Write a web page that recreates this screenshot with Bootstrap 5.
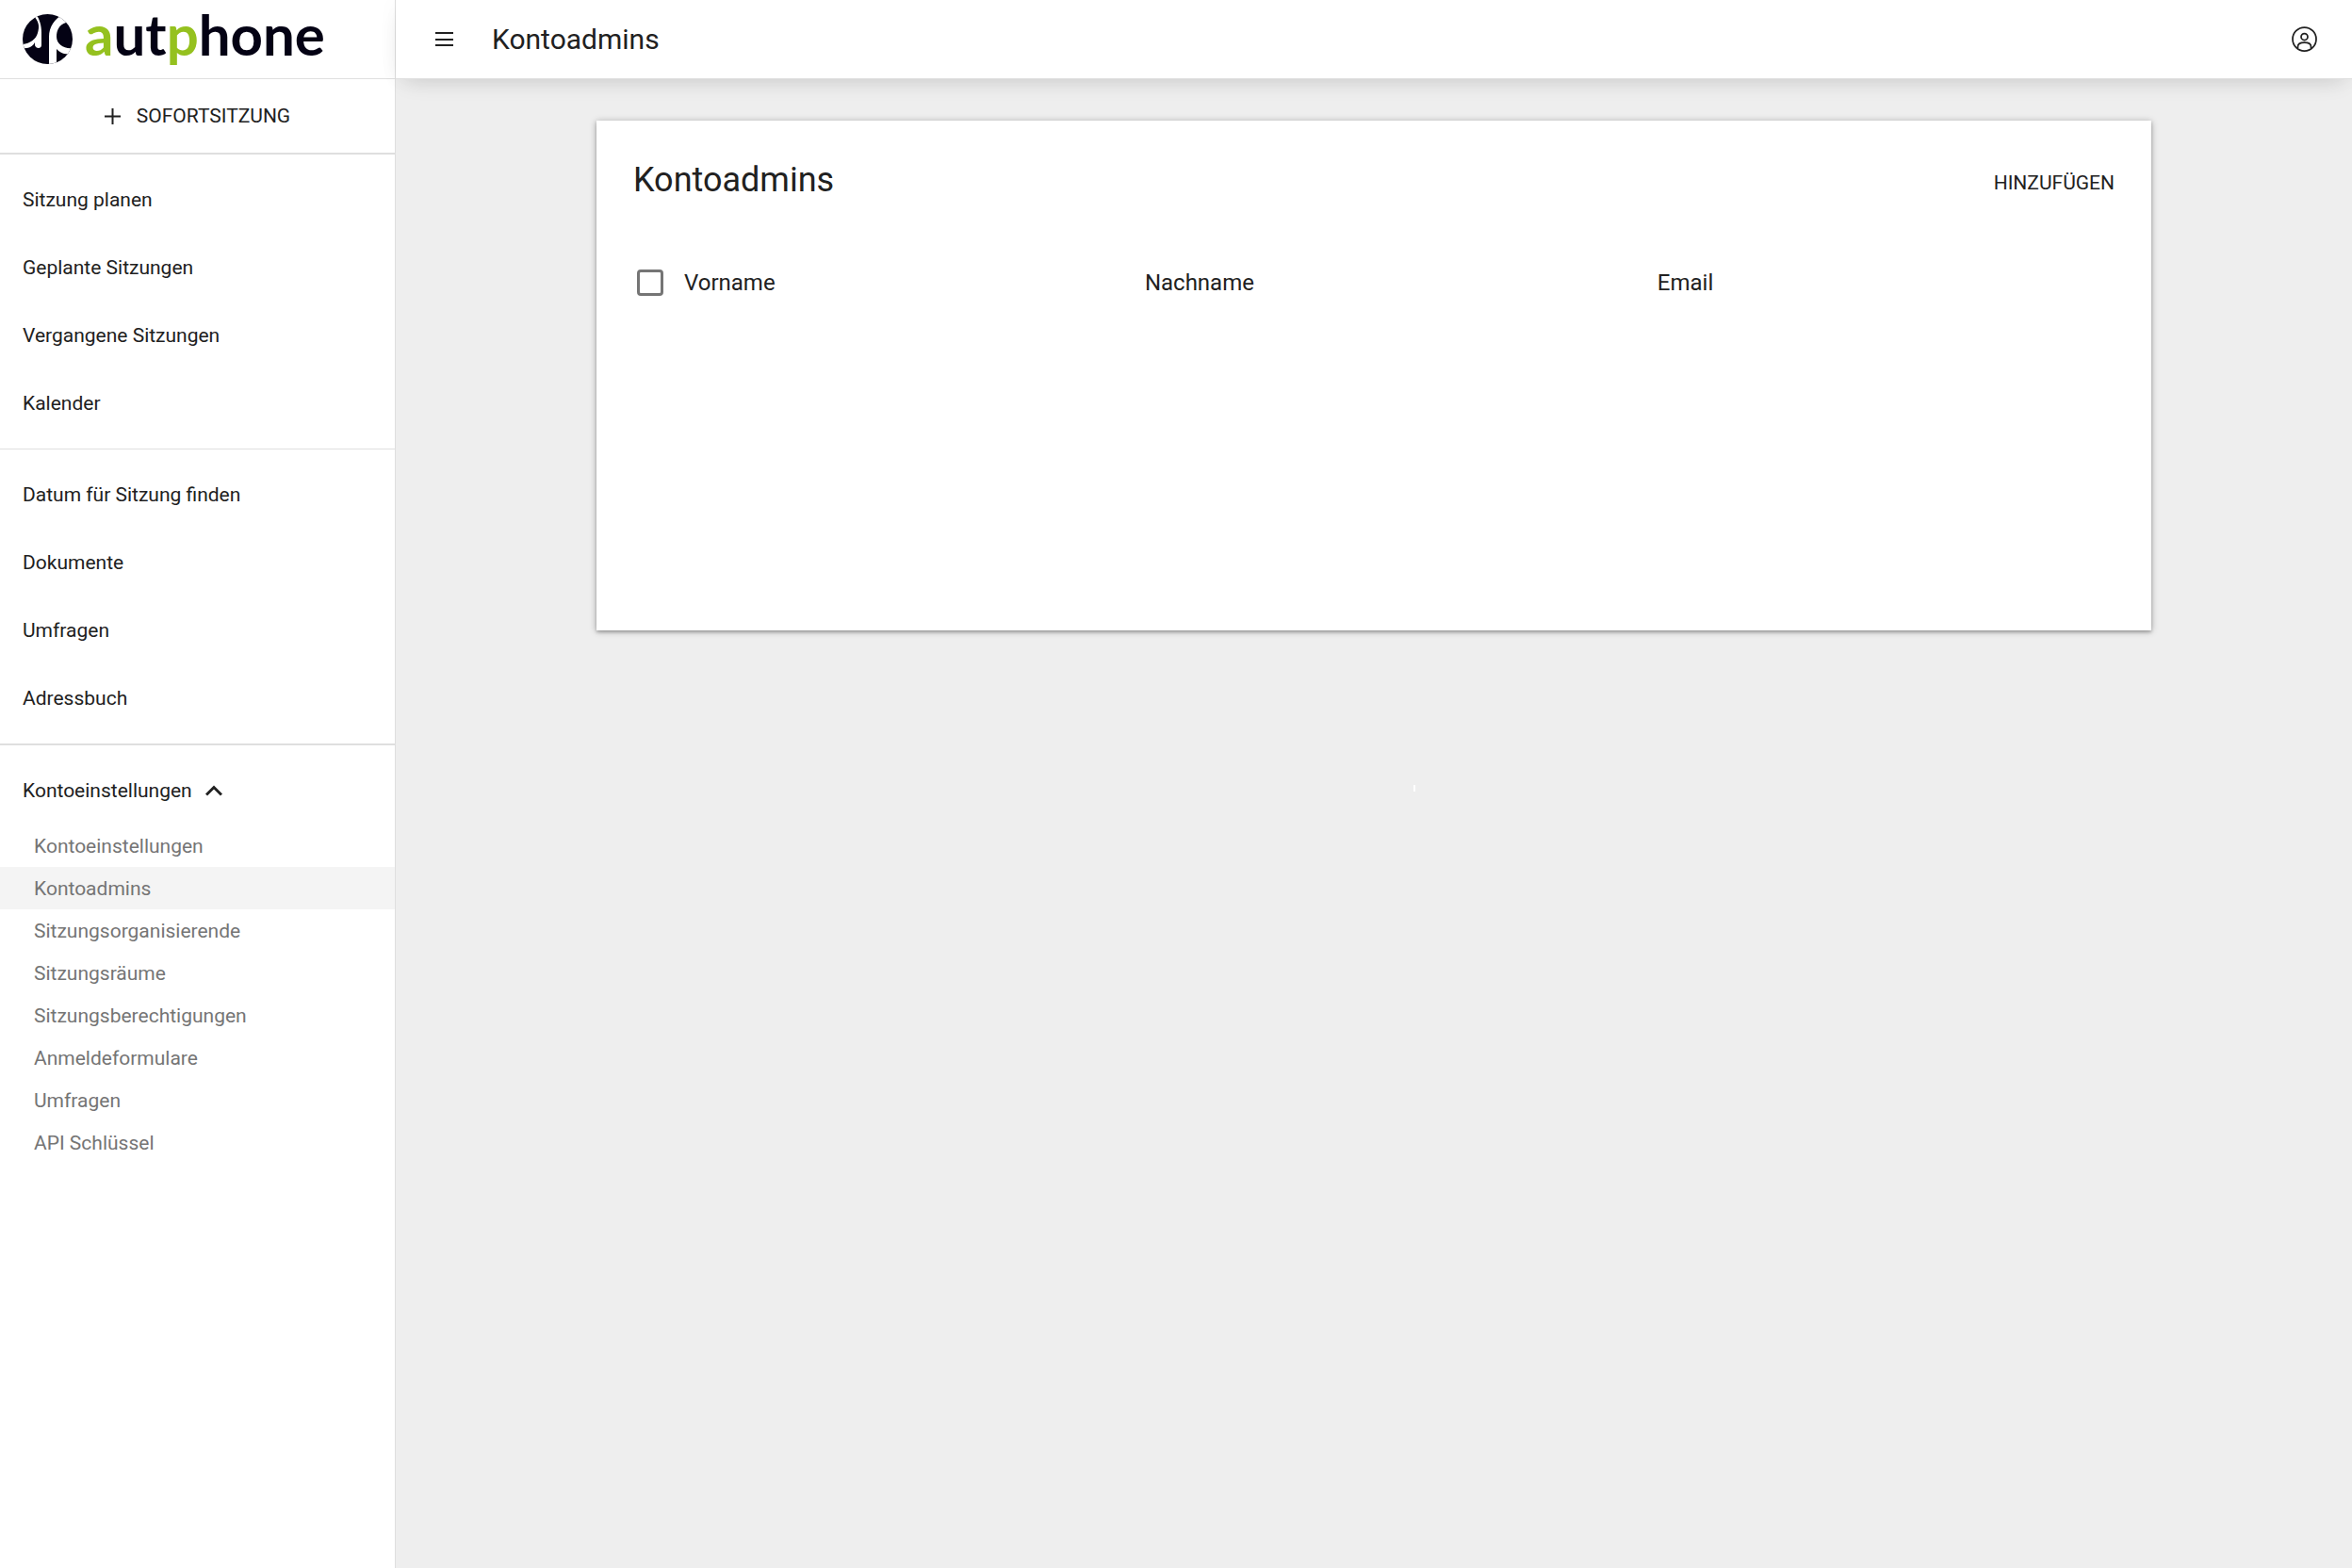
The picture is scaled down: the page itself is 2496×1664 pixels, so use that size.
<!DOCTYPE html>
<html lang="de">
<head>
<meta charset="utf-8">
<meta name="viewport" content="width=device-width, initial-scale=1">
<title>Kontoadmins – autphone</title>
<link href="https://cdn.jsdelivr.net/npm/bootstrap@5.3.0/dist/css/bootstrap.min.css" rel="stylesheet">
<style>
  :root { --ink: #212121; --muted: #757575; --line: #dfdfdf; --bar: 84px; }
  body { font-family: Roboto, "Liberation Sans", sans-serif; font-size: 21px; line-height: 30px; color: var(--ink); background: #eee; }
  a { color: inherit; text-decoration: none; }
  svg { display: block; }
  .side { width: 420px; background: #fff; border-right: 1px solid var(--line); }
  .brand { height: var(--bar); padding-left: 24px; gap: 13px; border-bottom: 1px solid var(--line); }
  .brand-word { align-self: flex-start; font-family: Lato, sans-serif; font-size: 60px; font-weight: 700; line-height: 72px; color: #040214; }
  .brand-word span { color: #95c11f; }
  .instant { height: 80px; border-bottom: 2px solid var(--line); }
  .instant .btn { gap: 17px; }
  .plain-btn, .plain-btn:hover { font-size: 21px; line-height: 30px; padding: 0; border: 0; border-radius: 0; color: var(--ink); }
  .group { padding: 12px 0; border-bottom: 1px solid var(--line); }
  .group-strong { border-bottom-width: 2px; }
  .group-last { border-bottom: 0; }
  .group .entry { display: flex; align-items: center; height: 72px; padding: 0 24px; gap: 14px; width: 100%; }
  .subs .sub { display: flex; align-items: center; height: 45px; padding: 0 36px; color: var(--muted); }
  .subs .current { background: #f4f4f4; }
  .topbar { height: var(--bar); background: #fff; border-bottom: 1px solid var(--line); padding: 0 37px 0 42px; box-shadow: 0 10px 24px -10px rgba(0,0,0,.16), 0 0 24px rgba(0,0,0,.03); }
  .topbar h1 { font-size: 30px; line-height: 42px; font-weight: 400; margin: 0 0 0 41px; }
  .panel { max-width: 1650px; min-height: 541px; margin: 44px auto 0; padding: 39px; border: 0; border-radius: 0; color: inherit; box-shadow: 0 1px 7px rgba(0,0,0,.3), 0 2px 3px rgba(0,0,0,.2); }
  .panel h2 { font-size: 36px; line-height: 48px; font-weight: 400; margin: 0; }
  .panel .plain-btn { margin-top: 6px; }
  .people { margin: 67px 0 0; table-layout: fixed; width: 100%; }
  .people th { font-size: 24px; line-height: 36px; font-weight: 400; padding: 0; text-align: left; vertical-align: middle; }
  .people .form-check-input { display: block; width: 28px; height: 28px; margin: 0 0 0 4px; border: 3px solid var(--muted); border-radius: 4px; }
  .loader { position: absolute; left: 52%; top: 833px; width: 2px; height: 7px; background: #fff; }
</style>
<script src="https://cdn.jsdelivr.net/npm/bootstrap@5.3.0/dist/js/bootstrap.bundle.min.js"></script>
</head>
<body>
<div class="d-flex min-vh-100">
  <aside class="side flex-shrink-0">
    <a href="#" class="brand d-flex align-items-center">
      <svg width="53" height="53" viewBox="0 0 53 53" aria-hidden="true">
        <defs><clipPath id="disc"><circle cx="26.500" cy="26.500" r="26.500"/></clipPath></defs>
        <g clip-path="url(#disc)">
          <rect width="53" height="53" fill="#040214"/>
          <path d="M10 0C18 8 18 13 16 20C14 27 8 31 0 32L0 36C6 37 11 34 13 30L13 33C14 37 20 37 20 33L20 20C20 12 18 5 14 0Z" fill="#fff"/>
          <path d="M44 0C34 4 28 14 28 24L28 53L36 53L36 37C39 40 43 43 48 42L53 38L53 36C44 37 36 32 36 24C36 17 39 11 46 9L49 4Z" fill="#fff"/>
        </g>
      </svg>
      <div class="brand-word"><span>a</span>ut<span>p</span>hone</div>
    </a>
    <div class="instant d-flex align-items-center justify-content-center">
      <button type="button" class="btn plain-btn d-flex align-items-center">
        <svg width="17" height="17" viewBox="0 0 17 17" stroke="#212121" stroke-width="2" aria-hidden="true"><path d="M8.500 0V17M0 8.500H17"/></svg>
        SOFORTSITZUNG
      </button>
    </div>
    <nav aria-label="Hauptmenü">
      <div class="group">
        <a class="entry" href="#">Sitzung planen</a>
        <a class="entry" href="#">Geplante Sitzungen</a>
        <a class="entry" href="#">Vergangene Sitzungen</a>
        <a class="entry" href="#">Kalender</a>
      </div>
      <div class="group group-strong">
        <a class="entry" href="#">Datum für Sitzung finden</a>
        <a class="entry" href="#">Dokumente</a>
        <a class="entry" href="#">Umfragen</a>
        <a class="entry" href="#">Adressbuch</a>
      </div>
      <div class="group group-last">
        <button type="button" class="btn plain-btn entry" data-bs-toggle="collapse" data-bs-target="#konto" aria-expanded="true">
          Kontoeinstellungen
          <svg width="18" height="12" viewBox="0 0 18 12" fill="none" stroke="#212121" stroke-width="3" aria-hidden="true"><path d="M1 10.500L9 2.500L17 10.500"/></svg>
        </button>
        <div id="konto" class="subs collapse show">
          <a class="sub" href="#">Kontoeinstellungen</a>
          <a class="sub current" href="#" aria-current="page">Kontoadmins</a>
          <a class="sub" href="#">Sitzungsorganisierende</a>
          <a class="sub" href="#">Sitzungsräume</a>
          <a class="sub" href="#">Sitzungsberechtigungen</a>
          <a class="sub" href="#">Anmeldeformulare</a>
          <a class="sub" href="#">Umfragen</a>
          <a class="sub" href="#">API Schlüssel</a>
        </div>
      </div>
    </nav>
  </aside>
  <div class="flex-grow-1 position-relative">
    <header class="topbar d-flex align-items-center">
      <button type="button" class="btn plain-btn" aria-label="Menü">
        <svg width="19" height="17" viewBox="0 0 19 17" stroke="#212121" stroke-width="2" aria-hidden="true"><path d="M0 2H19M0 9H19M0 15H19"/></svg>
      </button>
      <h1>Kontoadmins</h1>
      <button type="button" class="btn plain-btn ms-auto" aria-label="Profil">
        <svg width="27" height="27" viewBox="0 0 27 27" fill="none" stroke="#212121" stroke-width="1.750" aria-hidden="true"><circle cx="13.500" cy="13.500" r="12.500"/><circle cx="13.500" cy="11" r="3.500"/><path d="M6.500 23V21.500C6.500 18.500 9 17 13.500 17S20.500 18.500 20.500 21.500V23"/></svg>
      </button>
    </header>
    <main>
      <section class="card panel">
        <div class="d-flex align-items-center justify-content-between">
          <h2>Kontoadmins</h2>
          <button type="button" class="btn plain-btn">HINZUFÜGEN</button>
        </div>
        <table class="people">
          <colgroup><col style="width:54px"><col style="width:31.100%"><col style="width:34.600%"><col></colgroup>
          <thead>
            <tr>
              <th scope="col"><input class="form-check-input" type="checkbox" aria-label="Alle auswählen"></th>
              <th scope="col">Vorname</th>
              <th scope="col">Nachname</th>
              <th scope="col">Email</th>
            </tr>
          </thead>
        </table>
      </section>
    </main>
    <div class="loader" aria-hidden="true"></div>
  </div>
</div>
</body>
</html>
